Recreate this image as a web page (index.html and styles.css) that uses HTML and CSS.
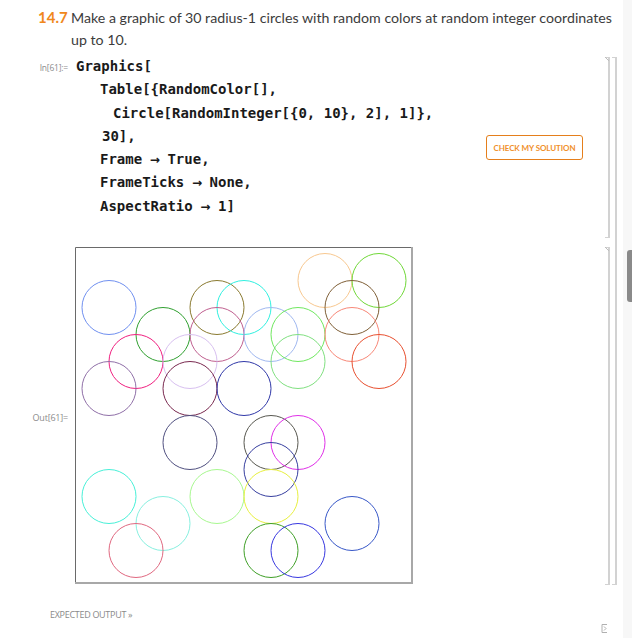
FILE: index.html
```html
<!DOCTYPE html>
<html lang="en">
<head>
<meta charset="utf-8">
<title>14.7</title>
<link rel="stylesheet" href="styles.css">
</head>
<body>
<div class="window">
  <main class="page">
    <header class="exercise">
      <span class="num">14.7</span>
      <p class="prompt">Make a graphic of 30 radius-1 circles with random colors at random integer coordinates up to 10.</p>
    </header>

    <section class="group">
      <div class="cells">
        <div class="cell cell-in">
          <div class="cell-body">
            <div class="label label-in">In[61]:=</div>
            <div class="code">
              <div class="ln">Graphics[</div>
              <div class="ln i1">Table[{RandomColor[],</div>
              <div class="ln i2">Circle[RandomInteger[{0, 10}, 2], 1]},</div>
              <div class="ln i3">30],</div>
              <div class="ln i1">Frame<span class="arr">→</span>True,</div>
              <div class="ln i1">FrameTicks<span class="arr">→</span>None,</div>
              <div class="ln i1">AspectRatio<span class="arr">→</span>1]</div>
            </div>
            <button class="check" type="button">CHECK MY SOLUTION</button>
          </div>
          <div class="bracket inner first"></div>
        </div>

        <div class="cell cell-out">
          <div class="cell-body">
            <div class="label label-out">Out[61]=</div>
            <svg class="plot" width="338" height="337" viewBox="0 0 338 337">
              <g transform="translate(34 303.5) scale(27 -27)" fill="none" stroke-width="1">
                <circle vector-effect="non-scaling-stroke" cx="0" cy="9" r="1" stroke="#7090f0"/>
                <circle vector-effect="non-scaling-stroke" cx="4" cy="9" r="1" stroke="#8a7a30"/>
                <circle vector-effect="non-scaling-stroke" cx="5" cy="9" r="1" stroke="#30f0e0"/>
                <circle vector-effect="non-scaling-stroke" cx="2" cy="8" r="1" stroke="#30a030"/>
                <circle vector-effect="non-scaling-stroke" cx="4" cy="8" r="1" stroke="#c06090"/>
                <circle vector-effect="non-scaling-stroke" cx="6" cy="8" r="1" stroke="#a0b8f0"/>
                <circle vector-effect="non-scaling-stroke" cx="1" cy="7" r="1" stroke="#f02080"/>
                <circle vector-effect="non-scaling-stroke" cx="3" cy="7" r="1" stroke="#d8c0f0"/>
                <circle vector-effect="non-scaling-stroke" cx="0" cy="6" r="1" stroke="#9070a8"/>
                <circle vector-effect="non-scaling-stroke" cx="3" cy="6" r="1" stroke="#7a2a50"/>
                <circle vector-effect="non-scaling-stroke" cx="5" cy="6" r="1" stroke="#3038a8"/>
                <circle vector-effect="non-scaling-stroke" cx="8" cy="10" r="1" stroke="#f8c890"/>
                <circle vector-effect="non-scaling-stroke" cx="10" cy="10" r="1" stroke="#70d838"/>
                <circle vector-effect="non-scaling-stroke" cx="9" cy="9" r="1" stroke="#806038"/>
                <circle vector-effect="non-scaling-stroke" cx="7" cy="8" r="1" stroke="#70e860"/>
                <circle vector-effect="non-scaling-stroke" cx="9" cy="8" r="1" stroke="#f88878"/>
                <circle vector-effect="non-scaling-stroke" cx="7" cy="7" r="1" stroke="#80e080"/>
                <circle vector-effect="non-scaling-stroke" cx="10" cy="7" r="1" stroke="#e85030"/>
                <circle vector-effect="non-scaling-stroke" cx="3" cy="4" r="1" stroke="#505080"/>
                <circle vector-effect="non-scaling-stroke" cx="0" cy="2" r="1" stroke="#48f0d8"/>
                <circle vector-effect="non-scaling-stroke" cx="2" cy="1" r="1" stroke="#88f0e0"/>
                <circle vector-effect="non-scaling-stroke" cx="4" cy="2" r="1" stroke="#a8f890"/>
                <circle vector-effect="non-scaling-stroke" cx="1" cy="0" r="1" stroke="#e06880"/>
                <circle vector-effect="non-scaling-stroke" cx="6" cy="4" r="1" stroke="#585850"/>
                <circle vector-effect="non-scaling-stroke" cx="7" cy="4" r="1" stroke="#e030e8"/>
                <circle vector-effect="non-scaling-stroke" cx="6" cy="3" r="1" stroke="#3840a0"/>
                <circle vector-effect="non-scaling-stroke" cx="6" cy="2" r="1" stroke="#e8f040"/>
                <circle vector-effect="non-scaling-stroke" cx="9" cy="1" r="1" stroke="#3858c8"/>
                <circle vector-effect="non-scaling-stroke" cx="6" cy="0" r="1" stroke="#40a028"/>
                <circle vector-effect="non-scaling-stroke" cx="7" cy="0" r="1" stroke="#3838e0"/>
              </g>
              <path d="M0.5 0.5 H336.5 M0.5 0.5 V336" stroke="#6a6a6a" stroke-width="1" fill="none"/>
              <path d="M337 0 V337 M0 336 H338" stroke="#a8a8a8" stroke-width="2" fill="none"/>
            </svg>
          </div>
          <div class="bracket inner"></div>
        </div>
      </div>
      <div class="bracket outer"></div>
    </section>

    <footer class="foot">
      <span class="expected">EXPECTED OUTPUT »</span>
      <svg class="corner-icon" width="7" height="11" viewBox="0 0 7 11">
        <path d="M1 1.5 H6 M1 1.5 V9.5 H6 M3 3.5 L5 5.5 L3 7.5" stroke="#b0b0b0" stroke-width="1" fill="none"/>
      </svg>
    </footer>
  </main>
  <aside class="scrollbar"><div class="thumb"></div></aside>
</div>
</body>
</html>
```

FILE: styles.css
```css
html, body {
  margin: 0;
  padding: 0;
  background: #ffffff;
}

body {
  font-family: "Lato", "Open Sans", sans-serif;
  color: #3a3a3a;
}

.window {
  display: flex;
  width: 632px;
  height: 638px;
  overflow: hidden;
}

.page {
  width: 623px;
  flex: none;
  display: flex;
  flex-direction: column;
}

.scrollbar {
  width: 9px;
  flex: none;
  background: #f7f7f7;
  display: flex;
  flex-direction: column;
  align-items: flex-end;
}

.thumb {
  margin-top: 250px;
  width: 5px;
  height: 52px;
  background: #8a8a8a;
  border-radius: 3px 0 0 3px;
}

/* header */
.exercise {
  display: flex;
  align-items: baseline;
  padding: 7px 5px 0 38px;
}

.num {
  flex: none;
  width: 33px;
  font-size: 15px;
  font-weight: 700;
  color: #f0881c;
}

.prompt {
  margin: 0;
  font-size: 14.2px;
  line-height: 22px;
  color: #3c3c3c;
}

/* cell group */
.group {
  display: flex;
  margin-top: 4px;
  padding-right: 6px;
}

.cells {
  flex: 1;
  display: flex;
  flex-direction: column;
}

.cell {
  display: flex;
}

.cell-body {
  flex: 1;
  display: grid;
  grid-template-columns: 75px 1fr auto;
}

.cell-in .cell-body {
  padding-bottom: 20px;
}

.cell-out {
  margin-top: 9px;
}

.cell-out .cell-body {
  padding-bottom: 1px;
}

.label {
  color: #8c8c8c;
  font-family: "Open Sans", "Lato", sans-serif;
  font-size: 8.5px;
  text-align: right;
  padding-right: 7px;
  letter-spacing: -0.2px;
}

.label-in {
  line-height: 23.3px;
  padding-top: 1px;
}

.label-out {
  align-self: center;
  font-size: 9px;
  padding-top: 3px;
}

.code {
  font-family: "DejaVu Sans Mono", monospace;
  font-weight: 700;
  font-size: 14px;
  line-height: 23.3px;
  color: #1a1a1a;
  padding-left: 1px;
}

.ln {
  white-space: pre;
}

.ln.i1 { padding-left: 24px; }
.ln.i2 { padding-left: 37px; }
.ln.i3 { padding-left: 26px; }

.arr {
  display: inline-block;
  width: 25.29px;
  text-align: center;
  font-family: "DejaVu Sans", sans-serif;
  font-weight: 700;
  font-size: 12px;
  line-height: 1;
}

.check {
  align-self: center;
  margin: 22px 22px 0 0;
  width: 97px;
  height: 25px;
  padding: 0;
  background: #ffffff;
  border: 1px solid #e57f1c;
  border-radius: 3px;
  color: #f0902c;
  font-family: "Lato", sans-serif;
  font-weight: 700;
  font-size: 8px;
  letter-spacing: -0.1px;
}

.plot {
  display: block;
}

/* brackets */
.bracket {
  flex: none;
  box-sizing: border-box;
  border: 1px solid #d2d2d2;
  border-left: none;
  border-right-width: 2px;
  margin-top: 2px;
}

.bracket.inner {
  width: 5px;
  position: relative;
}

.cell-out .bracket.inner {
  margin-top: 0;
}

.bracket.first::before,
.cell-out .bracket.inner::before {
  content: "";
  position: absolute;
  left: 0;
  top: -1px;
  width: 4px;
  height: 4px;
  background: linear-gradient(45deg, transparent 45%, #bdbdbd 45%, #bdbdbd 60%, transparent 60%);
}

.bracket.outer {
  width: 5px;
  margin-left: 2px;
}

/* footer */
.foot {
  display: flex;
  justify-content: space-between;
  align-items: flex-start;
  padding: 23px 15px 0 50px;
}

.expected {
  font-family: "Open Sans", "Lato", sans-serif;
  font-size: 9px;
  color: #8a8a8a;
  letter-spacing: -0.3px;
}

.corner-icon {
  margin-top: 15px;
}
```
